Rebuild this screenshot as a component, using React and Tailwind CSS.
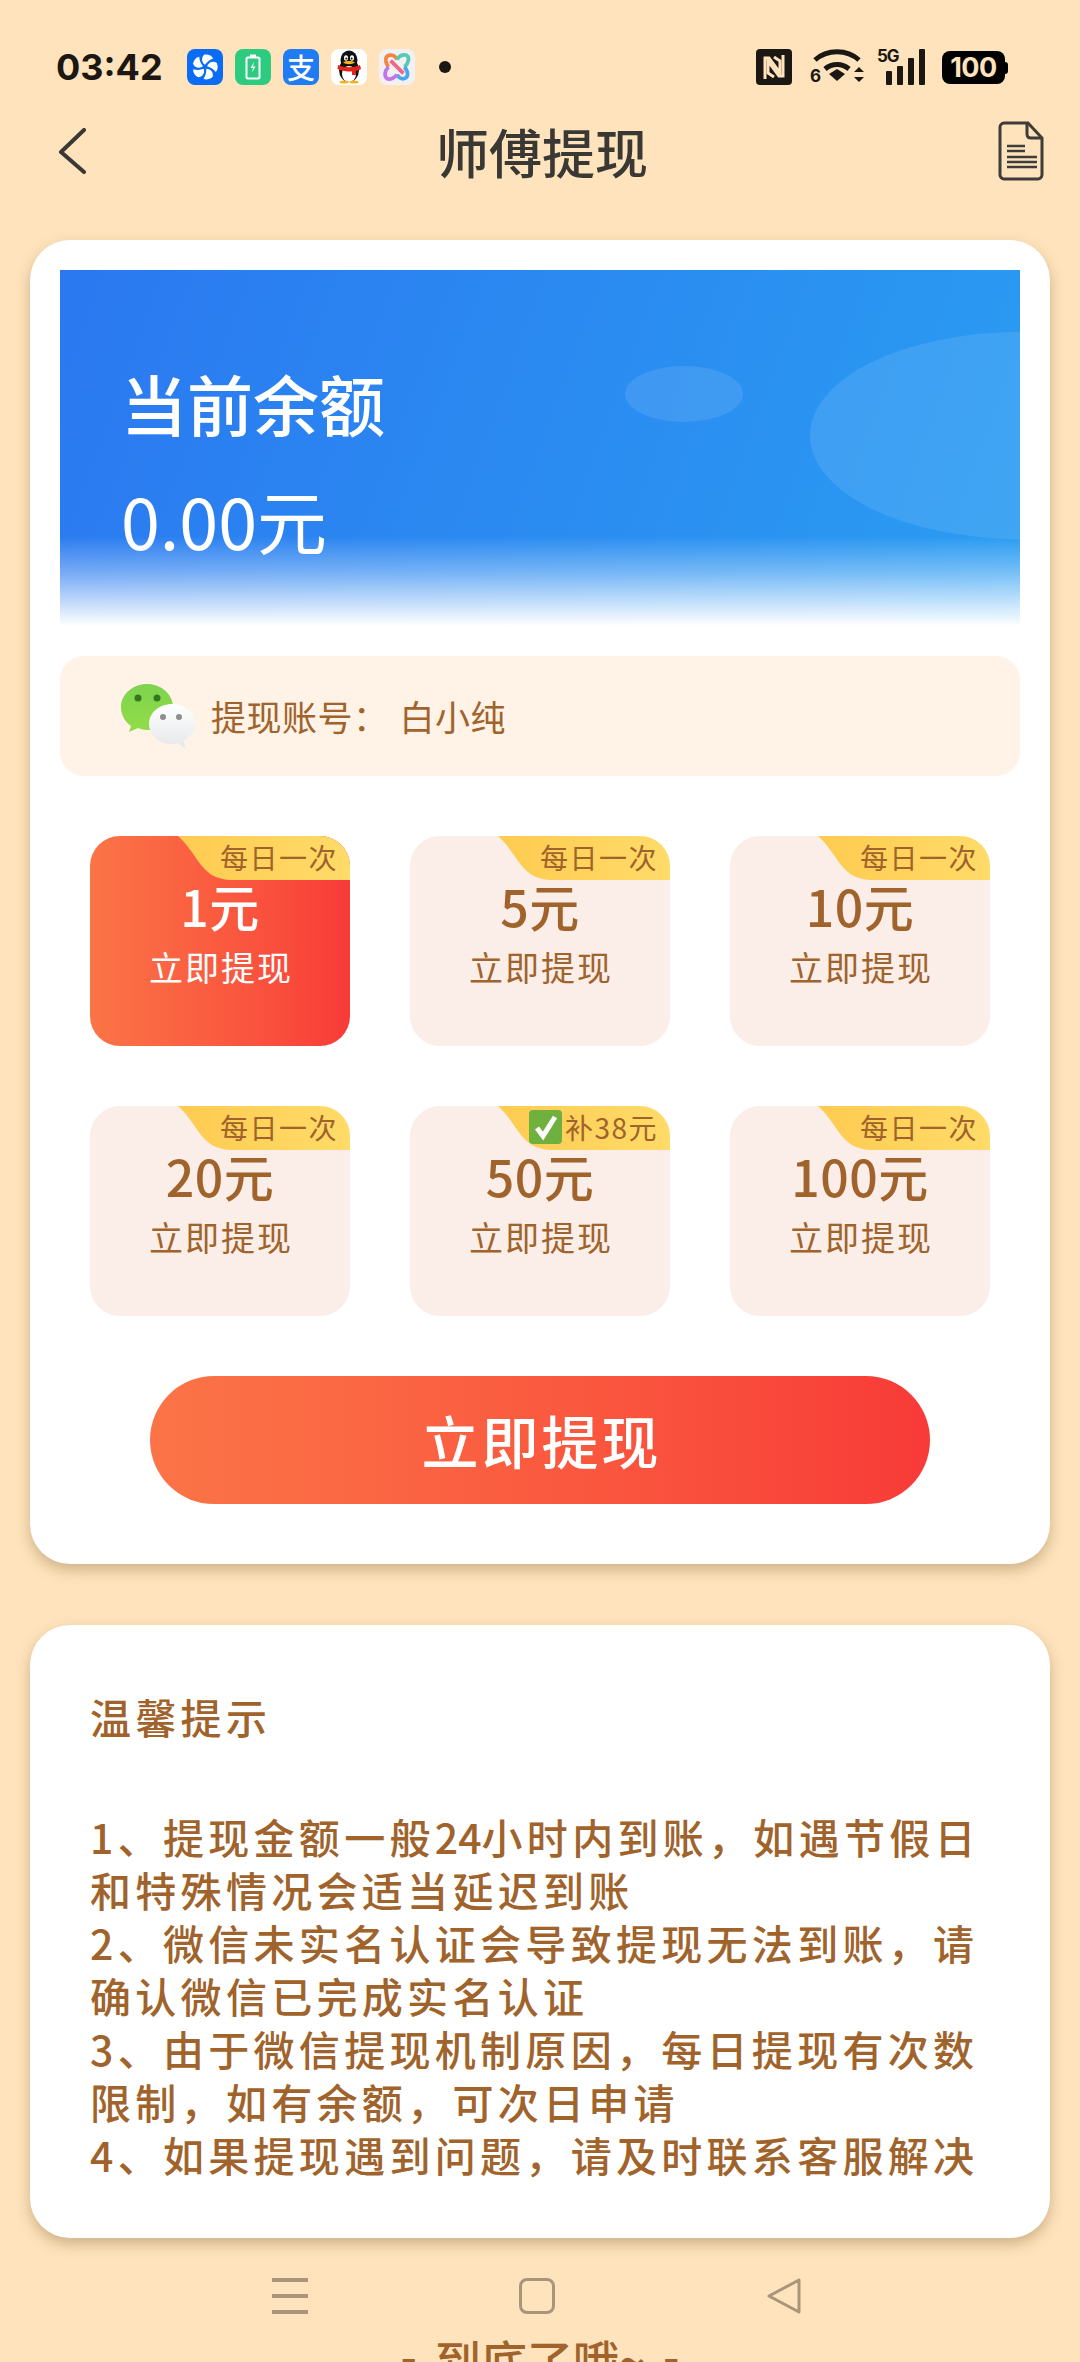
import React from "react";

const tiles = [
  { amount: "1元", tag: "每日一次", active: true },
  { amount: "5元", tag: "每日一次" },
  { amount: "10元", tag: "每日一次" },
  { amount: "20元", tag: "每日一次" },
  { amount: "50元", tag: "补38元", check: true },
  { amount: "100元", tag: "每日一次" },
];

const tips = [
  "2、微信未实名认证会导致提现无法到账，请",
  "确认微信已完成实名认证",
  "3、由于微信提现机制原因，每日提现有次数",
  "限制，如有余额，可次日申请",
  "4、如果提现遇到问题，请及时联系客服解决",
];

/* status bar app icons */
function FanIcon() {
  return (
    <div className="w-9 h-9 rounded-lg bg-[#0a6cf5] flex items-center justify-center">
      <svg width="28" height="28" viewBox="0 0 26 26" fill="#fff">
        {[0, 72, 144, 216, 288].map((deg) => (
          <path
            key={deg}
            transform={`rotate(${deg} 13 13)`}
            d="M13 11C9.500 8.500 9.500 4 12.500 1.500C16 1 19.500 2.500 20.500 5C17.500 6 15 8 13 11z"
          />
        ))}
      </svg>
    </div>
  );
}

function BatteryAppIcon() {
  return (
    <div className="w-9 h-9 rounded-lg bg-[#2ccb7f] flex items-center justify-center">
      <svg width="18" height="26" viewBox="0 0 18 26" fill="none">
        <rect x="6" y="0.500" width="6" height="3" fill="#fff" />
        <rect x="2.500" y="3.500" width="13" height="21" rx="1.500" stroke="#fff" strokeWidth="2" />
        <path d="M10 8l-3.500 6h2.500l-1 4.500 3.500-6H9z" fill="#fff" />
      </svg>
    </div>
  );
}

function AlipayIcon() {
  return (
    <div className="w-9 h-9 rounded-lg bg-[#1f7cf2] flex items-center justify-center">
      <span className="text-white text-[28px] leading-[36px] font-medium">支</span>
    </div>
  );
}

function QQIcon() {
  return (
    <div className="w-9 h-9 rounded-lg bg-white flex items-center justify-center">
      <svg width="28" height="34" viewBox="0 0 28 34">
        <ellipse cx="14" cy="20" rx="10" ry="12" fill="#111" />
        <ellipse cx="14" cy="10" rx="8.500" ry="9.500" fill="#111" />
        <ellipse cx="14" cy="24" rx="7" ry="8" fill="#fff" />
        <ellipse cx="11" cy="8" rx="2" ry="2.800" fill="#fff" />
        <ellipse cx="17" cy="8" rx="2" ry="2.800" fill="#fff" />
        <circle cx="11.300" cy="8.500" r="1" fill="#111" />
        <circle cx="16.700" cy="8.500" r="1" fill="#111" />
        <path d="M8 12c3-1.500 9-1.500 12 0-2 3-10 3-12 0z" fill="#f5b21b" />
        <path d="M3 15c6 3 16 3 22 0l1 4c-2 1-3 1.500-5 1.800V25h-4v-3.500C12 21.500 6 21 2.500 19z" fill="#e1251b" />
        <ellipse cx="9" cy="32" rx="4.500" ry="1.500" fill="#f5b21b" />
        <ellipse cx="19" cy="32" rx="4.500" ry="1.500" fill="#f5b21b" />
      </svg>
    </div>
  );
}

function OrbitIcon() {
  return (
    <div className="w-9 h-9 rounded-lg bg-[#f1f1f4] flex items-center justify-center">
      <svg width="30" height="30" viewBox="0 0 28 28" fill="none" strokeWidth="3.500">
        <path d="M6 14C2 8 3 3 8 3c3 0 5 2 6 4" stroke="#f5853f" />
        <path d="M14 7c2-3 5-5 9-4 3 2 2 7-2 11" stroke="#57c8b4" />
        <path d="M21 14c4 5 4 10-1 11-3 0-5-2-6-4" stroke="#4aa8ea" />
        <path d="M14 21c-2 3-6 5-9 4-3-2-3-7 1-11" stroke="#c274e8" />
        <path d="M8 8l12 12" stroke="#f0668a" />
      </svg>
    </div>
  );
}

/* status bar right side */
function NfcIcon() {
  return (
    <svg width="36" height="36" viewBox="0 0 36 36">
      <rect width="36" height="36" rx="4" fill="#1b1712" />
      <path d="M9 30V9h4l11 15V12l-6-4" fill="none" stroke="#fee3bc" strokeWidth="3" />
      <path d="M27 6v21h-4L12 12v12l6 4" fill="none" stroke="#fee3bc" strokeWidth="3" />
    </svg>
  );
}

function WifiIcon() {
  return (
    <div className="relative w-[54px] h-9">
      <svg width="54" height="36" viewBox="0 0 54 36" fill="none" stroke="#1b1712" strokeWidth="5">
        <path d="M5 11C17 0 37 0 49 11" />
        <path d="M15 20c7-6 17-6 24 0" />
        <path d="M19 25l8-5 8 5-8 7z" fill="#1b1712" stroke="none" />
        <path d="M44 23l5-5 5 5zM44 28h10l-5 5z" fill="#1b1712" stroke="none" />
      </svg>
      <span className="absolute left-0 bottom-0 text-[17px] leading-[17px] font-bold text-[#1b1712] font-['Inter',sans-serif]">6</span>
    </div>
  );
}

function SignalIcon() {
  return (
    <div className="relative w-12 h-9">
      <span className="absolute left-0 -top-0.5 text-[17px] leading-[18px] font-bold tracking-[-1px] text-[#1b1712] font-['Inter',sans-serif]">5G</span>
      <div className="absolute inset-0 flex items-end justify-end gap-[5px]">
        <div className="w-[6px] h-[14px] bg-[#1b1712] rounded-[1px]" />
        <div className="w-[6px] h-[19px] bg-[#1b1712] rounded-[1px]" />
        <div className="w-[6px] h-[27px] bg-[#1b1712] rounded-[1px]" />
        <div className="w-[6px] h-9 bg-[#1b1712] rounded-[1px]" />
      </div>
    </div>
  );
}

function BatteryIcon() {
  return (
    <div className="flex items-center mt-[2px]">
      <div className="w-[63px] h-[33px] rounded-lg bg-black flex items-center justify-center">
        <span className="text-[#fee3bc] text-[27px] leading-none font-bold tracking-[-0.5px] font-['Inter',sans-serif]">100</span>
      </div>
      <div className="w-[3px] h-[12px] bg-black rounded-r-sm" />
    </div>
  );
}

function WeChatIcon() {
  return (
    <svg width="76" height="70" viewBox="0 0 76 70">
      <defs>
        <linearGradient id="wxGreen" x1="0" y1="0" x2="0" y2="1">
          <stop offset="0" stopColor="#7ed34f" />
          <stop offset="1" stopColor="#93dc47" />
        </linearGradient>
        <linearGradient id="wxWhite" x1="0" y1="0" x2="0" y2="1">
          <stop offset="0" stopColor="#ffffff" />
          <stop offset="1" stopColor="#e4e7e8" />
        </linearGradient>
      </defs>
      <path d="M27 3C13 3 1 13 1 26c0 8 4 15 10 19l-2 6 9-4c3 1 6 2 9 2 14 0 26-10 26-23S41 3 27 3z" fill="url(#wxGreen)" />
      <circle cx="18" cy="17" r="3.500" fill="#2f7a1c" />
      <circle cx="37" cy="17" r="3.500" fill="#2f7a1c" />
      <path d="M52 23c-13 0-23 9-23 20s10 20 23 20c2 0 4-.5 6-1l7 6-1-9c7-3 11-9 11-16 0-11-10-20-23-20z" fill="url(#wxWhite)" />
      <circle cx="43" cy="36" r="3" fill="#8b8f92" />
      <circle cx="59" cy="36" r="3" fill="#8b8f92" />
    </svg>
  );
}

function Tile({ amount, tag, active, check }) {
  return (
    <div
      className={
        active
          ? "relative h-[210px] rounded-[30px] overflow-hidden bg-gradient-to-r from-[#fb7447] to-[#f83a38] text-white flex flex-col items-center pt-[41px]"
          : "relative h-[210px] rounded-[30px] overflow-hidden bg-[#fbeee8] text-[#a0632b] flex flex-col items-center pt-[41px]"
      }
    >
      <div className="absolute top-0 right-0 w-[172px] h-[44px]">
        <svg className="absolute inset-0" width="172" height="44" viewBox="0 0 172 44">
          <defs>
            <linearGradient id="tagFill" x1="0" y1="0" x2="1" y2="0">
              <stop offset="0" stopColor="#fecb50" />
              <stop offset="1" stopColor="#ffdb69" />
            </linearGradient>
          </defs>
          <path d="M0 0H172V44H56C36 44 28 36 20 25C13 15 8 7 0 0z" fill="url(#tagFill)" />
        </svg>
        <div className="absolute inset-x-0 top-0 h-[42px] flex items-center justify-end pr-[12px] text-[#a0632b] text-[28px] leading-none tracking-[1.5px]">
          {check && (
            <svg className="mr-[3px] shrink-0" width="33" height="36" viewBox="0 0 33 36">
              <rect x="0" y="1" width="33" height="34" rx="4" fill="#6fb03f" />
              <path d="M8 19l6 8L26 8" fill="none" stroke="#fff" strokeWidth="5" />
            </svg>
          )}
          {tag}
        </div>
      </div>
      <div className="text-[50px] leading-[56px] font-medium tracking-[0.5px]">{amount}</div>
      <div className="text-[34px] leading-[42px] tracking-[2px] pl-[2px] mt-[13px]">立即提现</div>
    </div>
  );
}

export default function App() {
  return (
    <div className="relative h-screen overflow-hidden bg-[#fee3bc] font-['Noto_Sans_CJK_SC',sans-serif]">
      {/* status bar */}
      <div className="h-[84px] pt-[49px] pl-[56px] pr-[72px] flex items-center justify-between">
        <div className="flex items-center">
          <span className="w-[131px] text-[36px] leading-9 font-bold text-[#1b1712] font-['Inter',sans-serif]">03:42</span>
          <div className="flex items-center gap-3">
            <FanIcon />
            <BatteryAppIcon />
            <AlipayIcon />
            <QQIcon />
            <OrbitIcon />
          </div>
          <div className="w-3 h-3 rounded-full bg-[#1b1712] ml-[24px]" />
        </div>
        <div className="flex items-center">
          <NfcIcon />
          <div className="ml-[18px]">
            <WifiIcon />
          </div>
          <div className="ml-[13px]">
            <SignalIcon />
          </div>
          <div className="ml-[17px]">
            <BatteryIcon />
          </div>
        </div>
      </div>

      {/* title bar */}
      <div className="h-[156px] flex items-center justify-between pl-[58px] pr-[36px] pb-[22px]">
        <svg width="28" height="46" viewBox="0 0 28 46" fill="none" stroke="#3a3835" strokeWidth="4" strokeLinecap="round" strokeLinejoin="round">
          <path d="M26 2L3 24l23 20" />
        </svg>
        <h1 className="text-[53px] leading-[60px] font-medium text-[#3a3835]">师傅提现</h1>
        <svg width="46" height="60" viewBox="0 0 46 60" fill="none" stroke="#3f3d3a" strokeWidth="3">
          <path d="M6 2h24l14 15v37c0 2-2 4-4 4H6c-2 0-4-2-4-4V6c0-2 2-4 4-4z" />
          <path d="M29 3v10c0 3 2 4 4 4h10" />
          <path d="M9 25h18M9 30h18M9 36h30M9 41h30M9 46h30" strokeWidth="2.500" />
        </svg>
      </div>

      {/* withdraw card */}
      <div className="mx-[30px] h-[1324px] bg-white rounded-[40px] p-[30px] shadow-[0_6px_14px_rgba(120,85,40,0.35)]">
        <div className="relative h-[356px] overflow-hidden bg-[linear-gradient(110deg,#2b78f0_0%,#2a9df2_100%)] pl-[61px] pt-[92px] text-white">
          <div className="absolute left-[565px] top-[96px] w-[118px] h-[56px] rounded-[50%] bg-white/10" />
          <div className="absolute left-[750px] top-[62px] w-[420px] h-[207px] rounded-[50%] bg-white/10" />
          <div className="absolute left-0 right-0 bottom-0 h-[90px] bg-gradient-to-b from-white/0 via-white/35 via-40% to-white" />
          <div className="relative text-[66px] leading-[80px] font-medium">当前余额</div>
          <div className="relative text-[70px] leading-[80px] mt-[38px]">0.00元</div>
        </div>

        <div className="mt-[30px] h-[120px] rounded-[24px] bg-[#fff2e6] flex items-center pl-[60px] text-[#a0632b] text-[35px] tracking-[0.5px]">
          <WeChatIcon />
          <span className="ml-[15px]">提现账号：</span>
          <span className="ml-[11px]">白小纯</span>
        </div>

        <div className="mt-[60px] px-[30px] grid grid-cols-3 gap-[60px]">
          {tiles.map((t) => (
            <Tile key={t.amount} {...t} />
          ))}
        </div>

        <div className="mt-[60px] mx-[90px] h-[128px] pl-[3px] rounded-full bg-gradient-to-r from-[#fb7447] to-[#f83a38] flex items-center justify-center text-white text-[57px] font-medium tracking-[3px]">
          立即提现
        </div>
      </div>

      {/* tips card */}
      <div className="mx-[30px] mt-[61px] h-[613px] bg-white rounded-[40px] pl-[60px] pt-[65px] shadow-[0_6px_14px_rgba(120,85,40,0.35)] text-[#a0632b] text-[41px] leading-[53px] tracking-[4.3px] font-medium">
        <div>温馨提示</div>
        <div className="mt-[67px] whitespace-nowrap">
          <div>
            1、提现金额一般<span className="tracking-normal">24</span>小时内到账，如遇节假日
          </div>
          <div>和特殊情况会适当延迟到账</div>
          {tips.map((line) => (
            <div key={line}>{line}</div>
          ))}
        </div>
      </div>

      <div className="mt-[96px] flex justify-center items-start text-[#a0632b] text-[46px] leading-[50px] font-medium">
        <span className="-mt-[5px]">-</span>
        <span className="mx-[18px]">到底了哦~</span>
        <span className="-mt-[5px]">-</span>
      </div>

      {/* system nav overlays the page */}
      <div className="absolute left-0 right-0 top-[2278px] flex items-center justify-center gap-[211px] -translate-x-[3px]">
        <div className="w-9 h-9 flex flex-col justify-between">
          <div className="h-[4px] bg-[#a8957a]" />
          <div className="h-[4px] bg-[#a8957a]" />
          <div className="h-[4px] bg-[#a8957a]" />
        </div>
        <div className="w-9 h-9 rounded-lg border-[3px] border-[#a8957a]" />
        <svg width="36" height="36" viewBox="0 0 36 36" fill="none" stroke="#a8957a" strokeWidth="3" strokeLinejoin="round">
          <path d="M33 2v32L3 18z" />
        </svg>
      </div>
    </div>
  );
}
